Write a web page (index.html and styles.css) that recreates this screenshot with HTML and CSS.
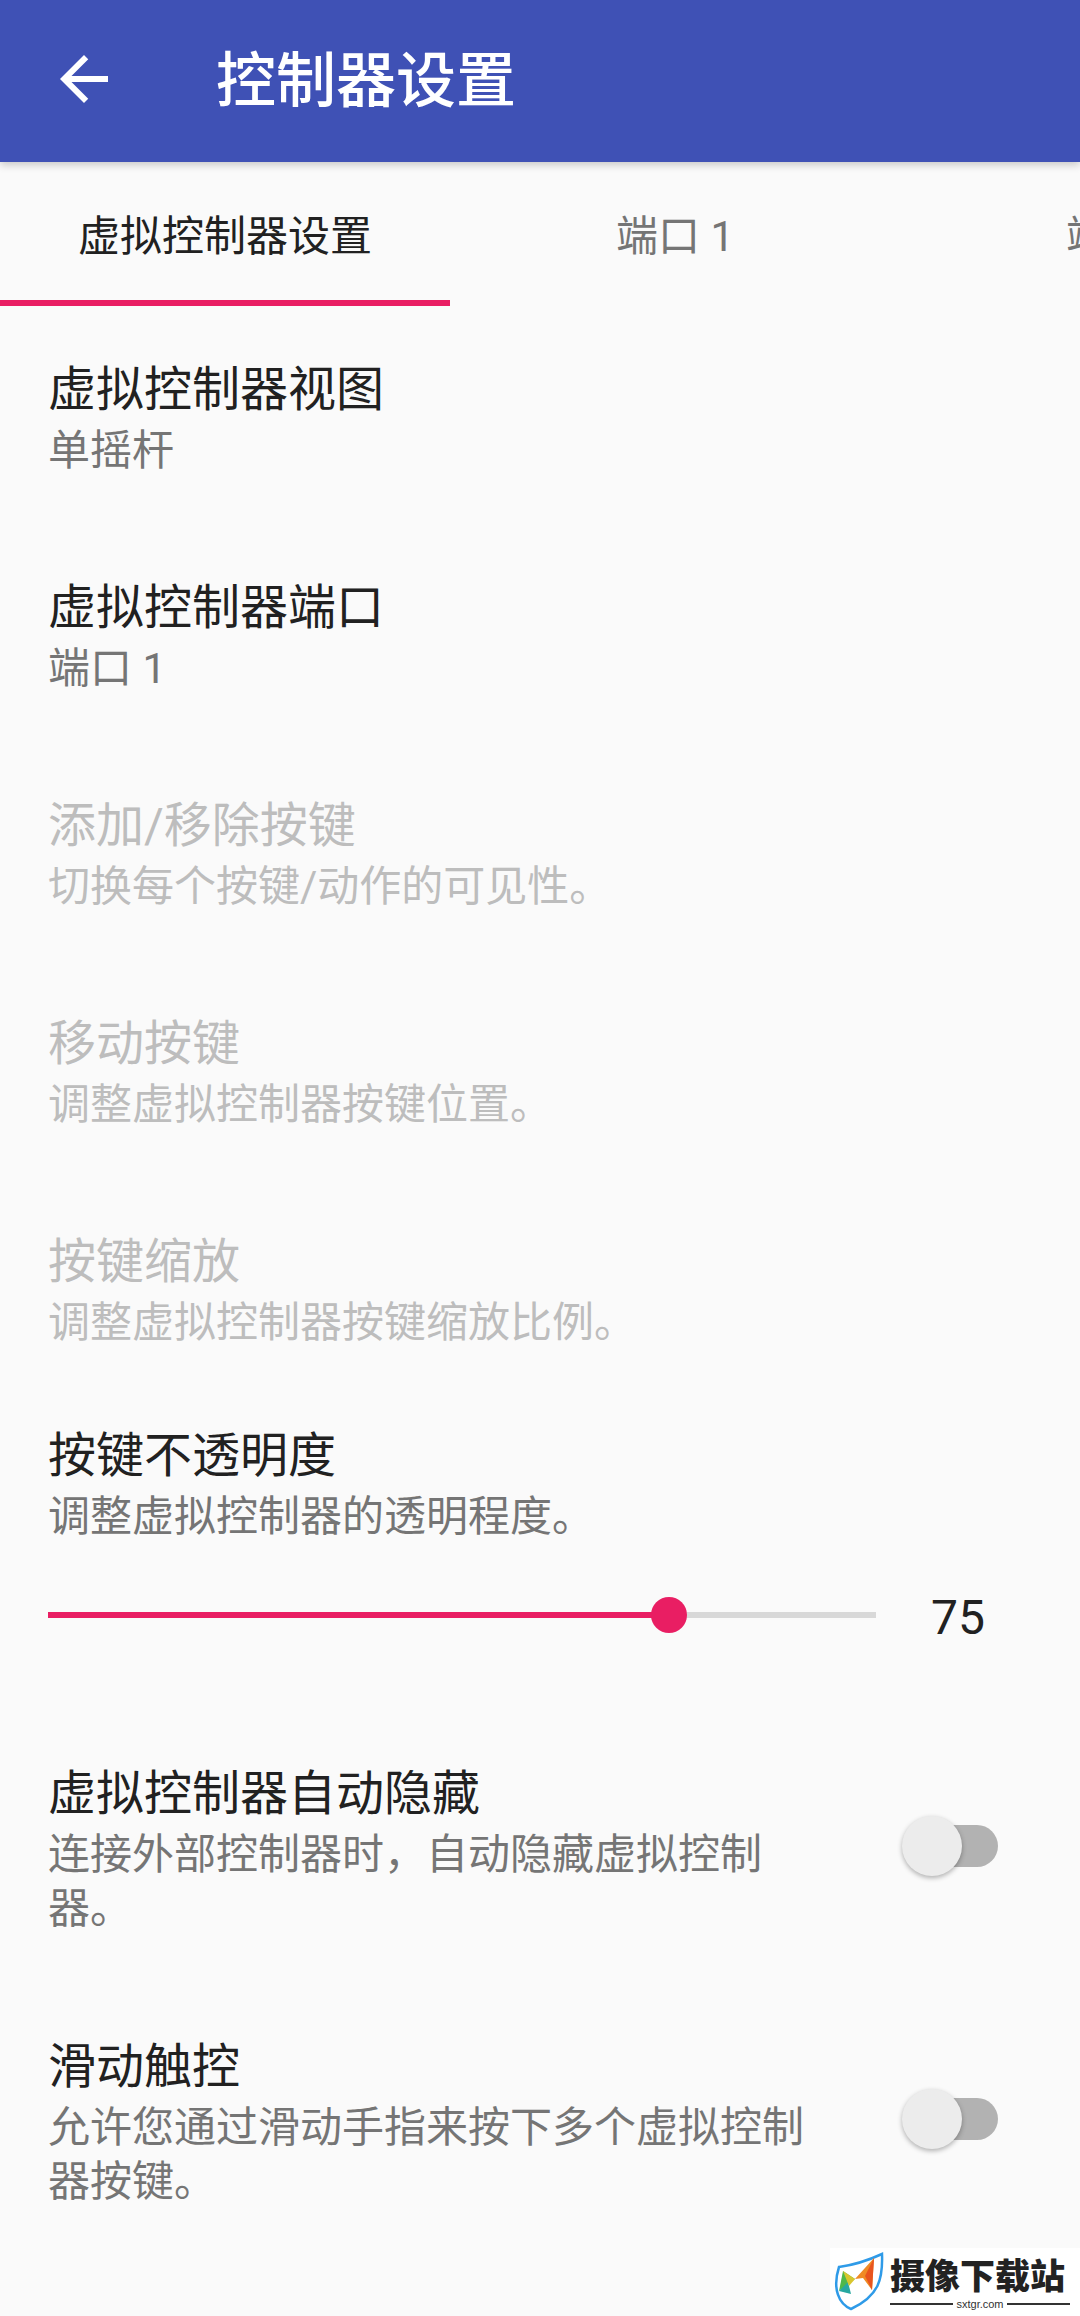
FILE: index.html
```html
<!DOCTYPE html>
<html lang="zh-CN">

<head>
    <meta charset="UTF-8">
    <meta name="viewport" content="width=device-width, initial-scale=1.0">
    <title>控制器设置</title>
    <link rel="stylesheet" href="styles.css">
</head>

<body>
    <header class="app-bar">
        <svg class="back-icon" viewBox="0 0 24 24"><path d="M20 11H7.83l5.59-5.59L12 4l-8 8 8 8 1.41-1.41L7.83 13H20v-2z"/></svg>
        <h1>控制器设置</h1>
    </header>

    <nav class="tabs">
        <div class="tab active">虚拟控制器设置</div>
        <div class="tab">端口 1</div>
        <div class="tab">端口 2</div>
    </nav>

    <main class="settings">
        <div class="item">
            <div class="item-title">虚拟控制器视图</div>
            <div class="item-sub">单摇杆</div>
        </div>
        <div class="item">
            <div class="item-title">虚拟控制器端口</div>
            <div class="item-sub">端口 1</div>
        </div>
        <div class="item disabled">
            <div class="item-title">添加/移除按键</div>
            <div class="item-sub">切换每个按键/动作的可见性。</div>
        </div>
        <div class="item disabled">
            <div class="item-title">移动按键</div>
            <div class="item-sub">调整虚拟控制器按键位置。</div>
        </div>
        <div class="item disabled">
            <div class="item-title">按键缩放</div>
            <div class="item-sub">调整虚拟控制器按键缩放比例。</div>
        </div>

        <div class="item slider-item">
            <div class="item-title">按键不透明度</div>
            <div class="item-sub">调整虚拟控制器的透明程度。</div>
            <div class="slider-row">
                <div class="slider">
                    <div class="slider-fill"></div>
                    <div class="slider-thumb"></div>
                </div>
                <div class="slider-value">75</div>
            </div>
        </div>

        <div class="item switch-item">
            <div class="switch-text">
                <div class="item-title">虚拟控制器自动隐藏</div>
                <div class="item-sub">连接外部控制器时，自动隐藏虚拟控制器。</div>
            </div>
            <div class="switch"><div class="switch-thumb"></div></div>
        </div>
        <div class="item switch-item">
            <div class="switch-text">
                <div class="item-title">滑动触控</div>
                <div class="item-sub">允许您通过滑动手指来按下多个虚拟控制器按键。</div>
            </div>
            <div class="switch"><div class="switch-thumb"></div></div>
        </div>
    </main>

    <div class="watermark">
        <svg class="watermark-logo" viewBox="-2 -2 52 60">
            <path d="M5 13 C20 11 35 6 48 0 C49 25 45 42 17 55 C5 50 -2 35 5 13z" fill="#fff" stroke="#2f9be8" stroke-width="2.5"/>
            <path d="M5 37 L9 17 L21 25z" fill="#4fb84a"/>
            <path d="M5 37 L14 28 L17 40z" fill="#27a8a0"/>
            <path d="M9 17 L21 25 L15 32z" fill="#d9c62e"/>
            <path d="M21 25 L40 4 L38 36 L29 24z" fill="#f08a24"/>
            <path d="M40 4 L38 36 L31 22z" fill="#e8541e"/>
        </svg>
        <div class="watermark-text">
            <div class="watermark-name">摄像下载站</div>
            <div class="watermark-url"><span>sxtgr.com</span></div>
        </div>
    </div>
</body>

</html>
```

FILE: styles.css
```css
:root {
    --primary: #3f51b5;
    --accent: #e91e63;
    --bg: #fafafa;
    --text: #212121;
    --text-sub: #757575;
    --text-off: #bdbdbd;
}

* {
    box-sizing: border-box;
}

html, body {
    height: 2316px;
    overflow: hidden;
}

body {
    position: relative;
    margin: 0;
    background-color: var(--bg);
    color: var(--text);
    font-family: Roboto, "Noto Sans CJK SC", sans-serif;
}

.app-bar {
    position: relative;
    display: flex;
    align-items: center;
    height: 162px;
    padding-left: 48px;
    background-color: var(--primary);
    box-shadow: 0 3px 8px rgba(0, 0, 0, 0.2);
}

.back-icon {
    width: 72px;
    height: 72px;
    margin-top: -4px;
    fill: #fff;
}

.app-bar h1 {
    margin: 0 0 12px 96px;
    font-size: 60px;
    font-weight: 500;
    color: #fff;
}

.tabs {
    display: flex;
    height: 144px;
    overflow: hidden;
}

.tab {
    flex: 0 0 450px;
    height: 144px;
    padding-top: 14px;
    line-height: 122px;
    text-align: center;
    font-size: 42px;
    color: var(--text-sub);
}

.tab.active {
    color: var(--text);
    border-bottom: 6px solid var(--accent);
}

.settings {
    padding-top: 50px;
}

.item {
    height: 218px;
    padding: 0 48px;
}

.item-title {
    font-size: 48px;
    line-height: 68px;
}

.item-sub {
    font-size: 42px;
    line-height: 54px;
    color: var(--text-sub);
}

.item.disabled .item-title,
.item.disabled .item-sub {
    color: var(--text-off);
}

.slider-item {
    height: 338px;
    margin-top: -24px;
}

.slider-row {
    display: flex;
    align-items: center;
    margin-top: 39px;
}

.slider {
    position: relative;
    width: 828px;
    height: 6px;
    background-color: #d8d8d8;
}

.slider-fill {
    width: 621px;
    height: 6px;
    background-color: var(--accent);
}

.slider-thumb {
    position: absolute;
    left: 603px;
    top: -15px;
    width: 36px;
    height: 36px;
    border-radius: 50%;
    background-color: var(--accent);
}

.slider-value {
    margin: 6px 0 0 55px;
    font-size: 48px;
}

.switch-item {
    display: flex;
    height: 273px;
    align-items: flex-start;
}

.switch-text {
    width: 790px;
    flex: none;
}

.switch {
    position: relative;
    width: 85px;
    height: 42px;
    margin: 65px 0 0 75px;
    border-radius: 21px;
    background-color: #b2b2b2;
    flex: none;
}

.switch-thumb {
    position: absolute;
    left: -11px;
    top: -9px;
    width: 60px;
    height: 60px;
    border-radius: 50%;
    background-color: #ececec;
    box-shadow: 0 2px 5px rgba(0, 0, 0, 0.3);
}

/* site stamp over the corner */
.watermark {
    position: absolute;
    left: 830px;
    top: 2248px;
    width: 250px;
    height: 68px;
    display: flex;
    align-items: center;
    background-color: #fff;
}

.watermark-logo {
    width: 52px;
    height: 60px;
    margin-left: 2px;
    flex: none;
}

.watermark-text {
    margin-left: 6px;
    width: 180px;
}

.watermark-name {
    font-family: "Noto Sans CJK SC", sans-serif;
    font-size: 35px;
    font-weight: 900;
    line-height: 44px;
    color: #222;
    white-space: nowrap;
}

.watermark-url {
    display: flex;
    align-items: center;
    justify-content: center;
    height: 16px;
    background: linear-gradient(#333, #333) center / 100% 2px no-repeat;
}

.watermark-url span {
    padding: 0 3px;
    font-family: "Liberation Sans", sans-serif;
    font-size: 11px;
    color: #333;
    background-color: #fff;
}
```
